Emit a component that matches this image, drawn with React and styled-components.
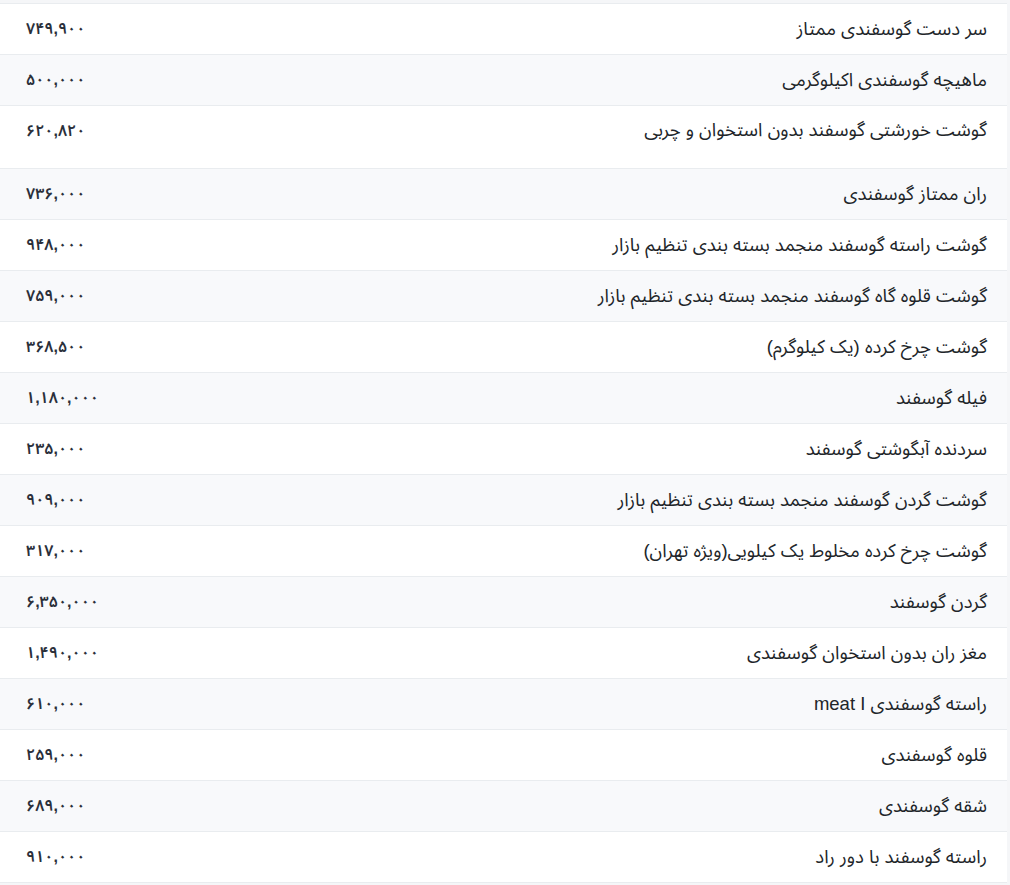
import React from "react";
import styled, { createGlobalStyle } from "styled-components";

const GlobalStyle = createGlobalStyle`
  html, body {
    margin: 0;
    padding: 0;
    background: #f5f6f8;
  }
  body {
    font-family: "Liberation Sans", "Noto Sans Arabic", "DejaVu Sans", sans-serif;
    color: #212529;
  }
`;

const prices = [
  { name: "سر دست گوسفندی ممتاز", price: "۷۴۹,۹۰۰" },
  { name: "ماهیچه گوسفندی اکیلوگرمی", price: "۵۰۰,۰۰۰" },
  { name: "گوشت خورشتی گوسفند بدون استخوان و چربی", price: "۶۲۰,۸۲۰", tall: true },
  { name: "ران ممتاز گوسفندی", price: "۷۳۶,۰۰۰" },
  { name: "گوشت راسته گوسفند منجمد بسته بندی تنظیم بازار", price: "۹۴۸,۰۰۰" },
  { name: "گوشت قلوه گاه گوسفند منجمد بسته بندی تنظیم بازار", price: "۷۵۹,۰۰۰" },
  { name: "گوشت چرخ کرده (یک کیلوگرم)", price: "۳۶۸,۵۰۰" },
  { name: "فیله گوسفند", price: "۱,۱۸۰,۰۰۰" },
  { name: "سردنده آبگوشتی گوسفند", price: "۲۳۵,۰۰۰" },
  { name: "گوشت گردن گوسفند منجمد بسته بندی تنظیم بازار", price: "۹۰۹,۰۰۰" },
  { name: "گوشت چرخ کرده مخلوط یک کیلویی(ویژه تهران)", price: "۳۱۷,۰۰۰" },
  { name: "گردن گوسفند", price: "۶,۳۵۰,۰۰۰" },
  { name: "مغز ران بدون استخوان گوسفندی", price: "۱,۴۹۰,۰۰۰" },
  { name: "راسته گوسفندی meat I", price: "۶۱۰,۰۰۰" },
  { name: "قلوه گوسفندی", price: "۲۵۹,۰۰۰" },
  { name: "شقه گوسفندی", price: "۶۸۹,۰۰۰" },
  { name: "راسته گوسفند با دور راد", price: "۹۱۰,۰۰۰" },
];

function App() {
  return (
    <>
      <GlobalStyle />
      <Page>
        <PriceTable dir="rtl">
          <tbody>
            {prices.map((item, i) => (
              <Row key={i} $striped={i % 2 === 1}>
                <NameCell $tall={item.tall}>{item.name}</NameCell>
                <PriceCell $tall={item.tall}>{item.price}</PriceCell>
              </Row>
            ))}
          </tbody>
        </PriceTable>
      </Page>
    </>
  );
}

export default App;

const Page = styled.div`
  padding: 3px 3px 3px 0;
  width: 1010px;
  box-sizing: border-box;
`;

const PriceTable = styled.table`
  width: 100%;
  border-collapse: collapse;
  background: #fff;
  font-size: 18.5px;
`;

const Row = styled.tr`
  background: ${(p) => (p.$striped ? "#f8f9fb" : "#fff")};
  border-top: 1px solid #e9ecef;
  border-bottom: 1px solid #e9ecef;
`;

const NameCell = styled.td`
  height: ${(p) => (p.$tall ? "63px" : "51px")};
  box-sizing: border-box;
  padding: ${(p) => (p.$tall ? "11px 20px 25px" : "0 20px 1px")};
  text-align: right;
  vertical-align: ${(p) => (p.$tall ? "top" : "middle")};
  line-height: 26px;
`;

const PriceCell = styled.td`
  padding: ${(p) => (p.$tall ? "12px 26px 24px" : "0 26px")};
  text-align: left;
  vertical-align: ${(p) => (p.$tall ? "top" : "middle")};
  font-weight: 600;
  font-size: 16px;
  color: #2a2f3a;
  line-height: 26px;
  white-space: nowrap;
`;
